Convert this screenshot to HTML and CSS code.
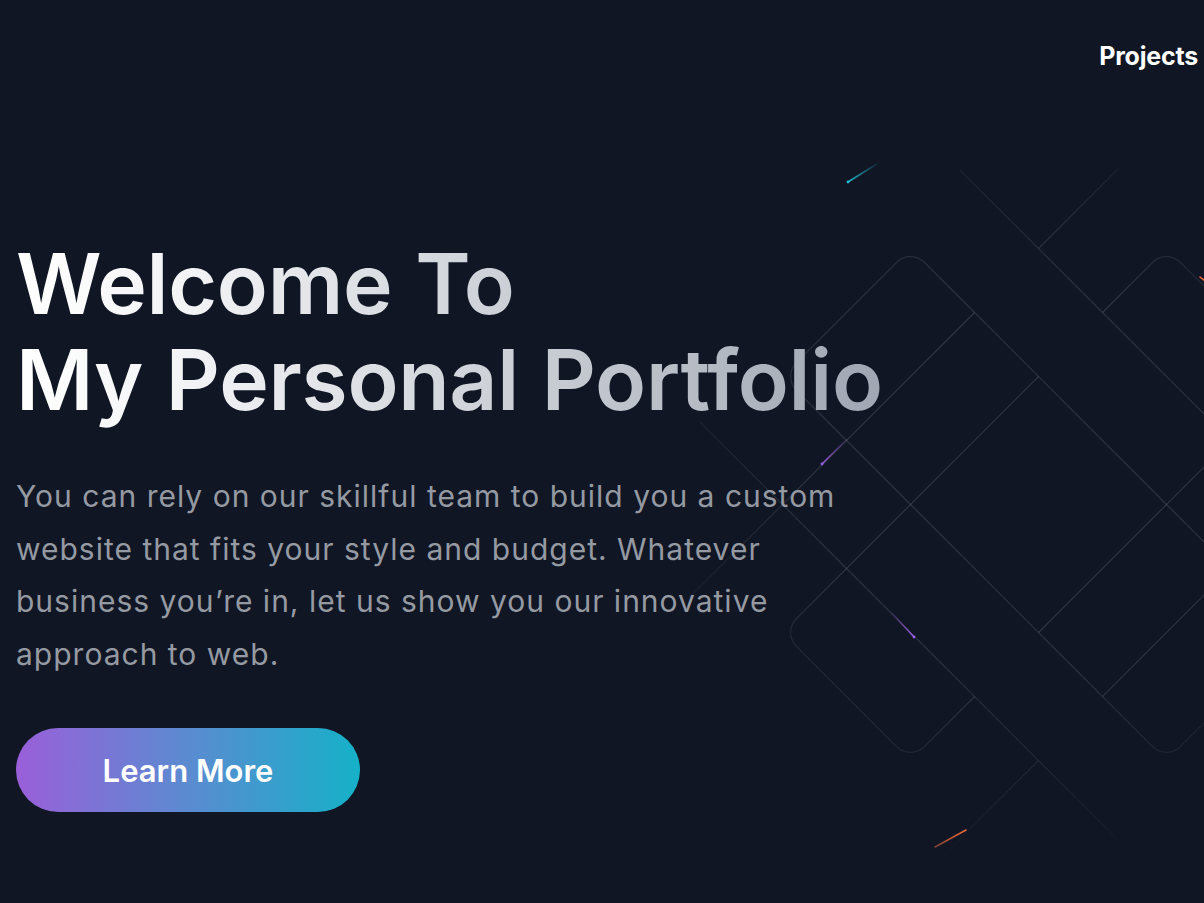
FILE: index.html
```html
<!DOCTYPE html>
<html lang="en">
<head>
<meta charset="utf-8">
<title>Portfolio</title>
<link rel="stylesheet" href="styles.css">
</head>
<body>
<div class="page">
  <svg class="bg-grid" viewBox="0 0 1204 903" width="1204" height="903" aria-hidden="true">
    <defs>
      <radialGradient id="fade" gradientUnits="userSpaceOnUse" cx="1020" cy="480" r="400">
        <stop offset="0" stop-color="#fff"/>
        <stop offset="0.5" stop-color="#fff"/>
        <stop offset="0.8" stop-color="#666"/>
        <stop offset="1" stop-color="#000"/>
      </radialGradient>
      <mask id="gridMask" maskUnits="userSpaceOnUse" x="0" y="0" width="1204" height="903">
        <rect x="0" y="0" width="1204" height="903" fill="url(#fade)"/>
      </mask>
      <linearGradient id="mCyan" gradientUnits="userSpaceOnUse" x1="848" y1="182" x2="880" y2="162">
        <stop offset="0" stop-color="#22b8cf"/>
        <stop offset="1" stop-color="#22b8cf" stop-opacity="0"/>
      </linearGradient>
      <linearGradient id="mPurpleA" gradientUnits="userSpaceOnUse" x1="822" y1="464" x2="849" y2="437">
        <stop offset="0" stop-color="#9b5de5"/>
        <stop offset="1" stop-color="#9b5de5" stop-opacity="0"/>
      </linearGradient>
      <linearGradient id="mPurpleB" gradientUnits="userSpaceOnUse" x1="914" y1="637" x2="889" y2="610">
        <stop offset="0" stop-color="#9b5de5"/>
        <stop offset="1" stop-color="#9b5de5" stop-opacity="0"/>
      </linearGradient>
      <linearGradient id="mOrange" gradientUnits="userSpaceOnUse" x1="966" y1="830" x2="935" y2="847">
        <stop offset="0" stop-color="#ef6a3a"/>
        <stop offset="1" stop-color="#ef6a3a" stop-opacity="0.5"/>
      </linearGradient>
    </defs>
    <g mask="url(#gridMask)">
      <g class="grid-lines" transform="matrix(0.5 0.5 0.5 -0.5 0 0)">
        <rect x="1159" y="406" width="768" height="256" rx="28" ry="28"/>
        <line x1="1927" y1="662" x2="2500" y2="662"/>
        <line x1="1927" y1="662" x2="1927" y2="1100"/>
        <path d="M1415 662 L1415 178 A28 28 0 0 1 1443 150 L1643 150 A28 28 0 0 1 1671 178 L1671 278"/>
        <path d="M1415 790 L1415 890 A28 28 0 0 0 1443 918 L2500 918"/>
        <line x1="1287" y1="90" x2="1287" y2="662"/>
        <line x1="1287" y1="790" x2="1287" y2="950"/>
        <line x1="1671" y1="406" x2="1671" y2="900"/>
        <line x1="1799" y1="40" x2="1799" y2="278"/>
        <line x1="1799" y1="406" x2="1799" y2="900"/>
        <line x1="1120" y1="278" x2="2120" y2="278"/>
        <line x1="1130" y1="790" x2="2500" y2="790"/>
      </g>
    </g>
    <g class="meteors">
      <line x1="848" y1="182" x2="880" y2="162" stroke="url(#mCyan)"/>
      <circle cx="848" cy="182" r="1.4" fill="#22b8cf"/>
      <line x1="822" y1="464" x2="849" y2="437" stroke="url(#mPurpleA)"/>
      <circle cx="822" cy="464" r="1.4" fill="#9b5de5"/>
      <line x1="914" y1="637" x2="889" y2="610" stroke="url(#mPurpleB)"/>
      <circle cx="914" cy="637" r="1.4" fill="#9b5de5"/>
      <line x1="966" y1="830" x2="935" y2="847" stroke="url(#mOrange)"/>
      <line x1="1200" y1="277" x2="1205" y2="281" stroke="#ef6a3a" stroke-width="2"/>
    </g>
  </svg>

  <header class="nav">
    <a class="nav-link" href="#projects">Projects</a>
  </header>

  <main class="hero">
    <h1 class="title">Welcome To<br>My Personal Portfolio</h1>
    <p class="lead">You can rely on our skillful team to build you a custom website that fits your style and budget. Whatever business you’re in, let us show you our innovative approach to web.</p>
    <a class="cta" href="#learn">Learn More</a>
  </main>
</div>
</body>
</html>
```

FILE: styles.css
```css
* { box-sizing: border-box; }

html, body {
  margin: 0;
  padding: 0;
  background: #101624;
}

body {
  font-family: "Inter", "Liberation Sans", sans-serif;
  color: #fff;
}

.page {
  position: relative;
  width: 100%;
  min-height: 100vh;
  overflow: hidden;
  background: #101624;
}

.bg-grid {
  position: absolute;
  top: 0;
  left: 0;
  z-index: 0;
}

.grid-lines rect,
.grid-lines line,
.grid-lines path {
  fill: none;
  stroke: rgba(255, 255, 255, 0.13);
  stroke-width: 1.2;
  vector-effect: non-scaling-stroke;
}

.meteors line {
  stroke-width: 1.5;
  stroke-linecap: round;
}

.nav {
  position: relative;
  z-index: 1;
  display: flex;
  justify-content: flex-end;
  padding: 40px 6px 0 0;
}

.nav-link {
  color: #fff;
  text-decoration: none;
  font-size: 25px;
  font-weight: 700;
  line-height: 32px;
  letter-spacing: -0.2px;
}

.hero {
  position: relative;
  z-index: 1;
  display: flex;
  flex-direction: column;
  align-items: flex-start;
  padding: 164px 16px 0 16px;
}

.title {
  margin: 0;
  font-size: 84px;
  line-height: 96px;
  font-weight: 600;
  letter-spacing: -0.3px;
  word-spacing: 2px;
  width: 900px;
  background: linear-gradient(90deg, #ffffff 0%, #f3f4f6 18%, #9ca3af 100%);
  -webkit-background-clip: text;
  background-clip: text;
  color: transparent;
}

.lead {
  margin: 42px 0 0 0;
  max-width: 850px;
  font-size: 30px;
  line-height: 52.5px;
  font-weight: 400;
  letter-spacing: 1px;
  color: #959aa2;
}

.cta {
  margin-top: 48px;
  display: flex;
  align-items: center;
  justify-content: center;
  width: 344px;
  height: 84px;
  border-radius: 42px;
  background: linear-gradient(90deg, #9a5fd9 0%, #5b8bd1 50%, #15b1c8 100%);
  color: #fff;
  text-decoration: none;
  font-size: 31px;
  font-weight: 600;
}
```
